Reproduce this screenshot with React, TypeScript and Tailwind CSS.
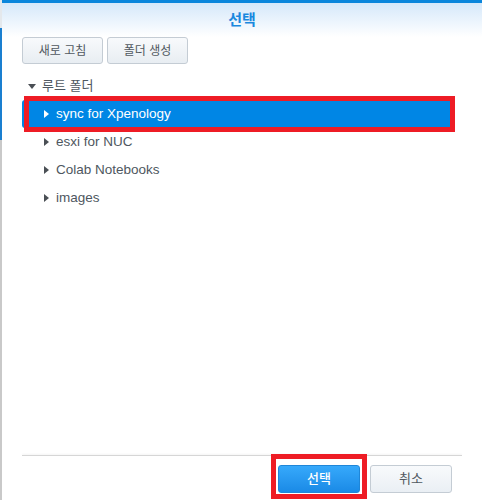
import React from "react";

const Tri = ({ white }: { white?: boolean }) => (
  <svg width="5" height="8" viewBox="0 0 5 8" className="shrink-0">
    <path d="M0 0 L5 4 L0 8 Z" fill={white ? "#ffffff" : "#4a4f55"} />
  </svg>
);

const TriDown = () => (
  <svg width="8" height="5" viewBox="0 0 8 5" className="shrink-0">
    <path d="M0 0 L8 0 L4 5 Z" fill="#4a4f55" />
  </svg>
);

const font = { fontFamily: '"Liberation Sans", "Noto Sans CJK KR", sans-serif' };

export default function App() {
  const items = ["sync for Xpenology", "esxi for NUC", "Colab Notebooks", "images"];
  return (
    <div className="flex h-[500px] w-[482px] overflow-hidden bg-white" style={font}>
      <div className="flex w-[2px] flex-col">
        <div className="h-[28px] bg-[#e4e8ec]" />
        <div className="h-[112px] bg-[#1a7fd0]" />
        <div className="flex-1 bg-[#c9c9c9]" />
      </div>
      <div className="flex flex-1 flex-col">
        <div className="h-[3px] bg-[#0a86dc]" />
        <div className="flex h-[34px] items-center justify-center bg-gradient-to-b from-[#d5e8fa] to-[#ffffff]">
          <span className="text-[15px] font-bold text-[#1a88de]">선택</span>
        </div>
        <div className="flex gap-[4px] pl-[20px]">
          <button className="h-[27px] w-[81px] rounded-[3px] border border-[#c4ccd4] bg-gradient-to-b from-[#f8fafc] to-[#e8edf2] text-[12px] text-[#505860]">
            새로 고침
          </button>
          <button className="h-[27px] w-[81px] rounded-[3px] border border-[#c4ccd4] bg-gradient-to-b from-[#f8fafc] to-[#e8edf2] text-[12px] text-[#505860]">
            폴더 생성
          </button>
        </div>
        <div className="mt-[8px] flex flex-1 flex-col pl-[20px] pr-[32px] text-[13.5px] text-[#4e5760]">
          <div className="flex h-[28px] items-center gap-[6px] pl-[6px]">
            <TriDown />
            <span className="text-[13px]">루트 폴더</span>
          </div>
          {items.map((t, i) => {
            const sel = i === 0;
            return (
              <div
                key={t}
                className={
                  "relative flex h-[28px] items-center gap-[7px] pl-[22px] " +
                  (sel ? "rounded-l-[3px] bg-[#0086e5] text-white" : "")
                }
              >
                <Tri white={sel} />
                <span>{t}</span>
                {sel && (
                  <div className="pointer-events-none absolute -bottom-[4px] -right-[5px] -top-[4px] left-[2px] border-[5px] border-[#ee1c25]" />
                )}
              </div>
            );
          })}
        </div>
        <div className="mx-[20px] h-[1px] bg-[#d6d6d6] shadow-[0_-1px_2px_rgba(0,0,0,0.06)]" />
        <div className="flex h-[44px] items-start justify-end gap-[10px] pr-[30px] pt-[9px]">
          <div className="relative">
            <button className="h-[28px] w-[82px] rounded-[3px] border border-[#1f86d8] bg-gradient-to-b from-[#36a9fb] to-[#1a8ae6] text-[13px] font-medium text-white">
              선택
            </button>
            <div className="pointer-events-none absolute -bottom-[6px] -left-[7px] -right-[7px] -top-[11px] border-[5px] border-[#ee1c25]" />
          </div>
          <button className="h-[28px] w-[82px] rounded-[3px] border border-[#c4ccd4] bg-gradient-to-b from-[#f8fafc] to-[#eaeff4] text-[13px] text-[#505860]">
            취소
          </button>
        </div>
      </div>
    </div>
  );
}
